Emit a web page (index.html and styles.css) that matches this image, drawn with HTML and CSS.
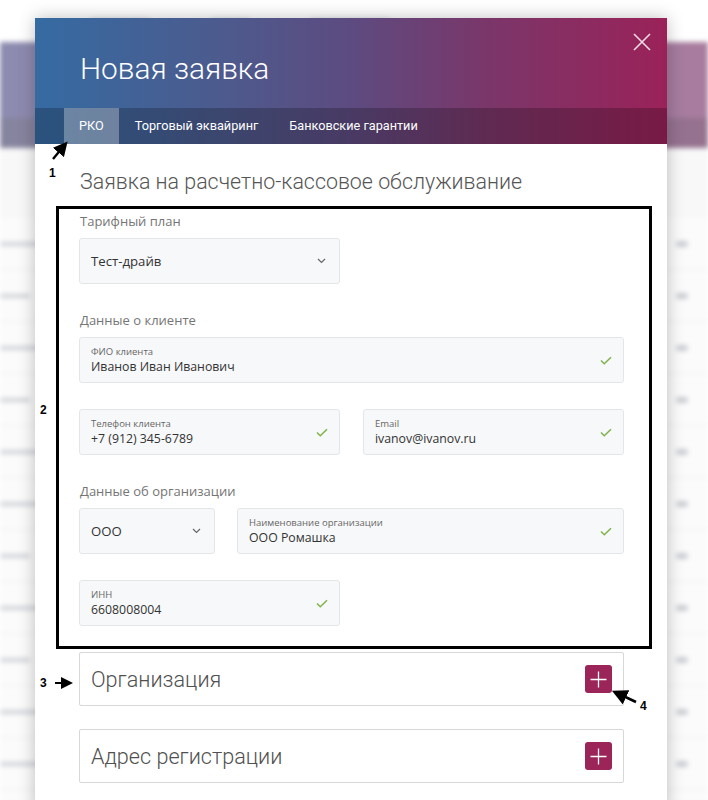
FILE: index.html
```html
<!DOCTYPE html>
<html lang="ru">
<head>
<meta charset="utf-8">
<title>Новая заявка</title>
<link rel="stylesheet" href="styles.css">
</head>
<body>
<div class="page">
  <div class="bg">
    <div class="bg-top">
      <span class="bg-txt w60"></span><span class="bg-txt w40"></span><span class="bg-txt w80"></span>
    </div>
    <div class="bg-band"><div class="bg-band-low"></div></div>
    <div class="bg-rows">
      <div class="bg-row"><span class="bg-txt w50"></span><span class="dot"></span></div>
      <div class="bg-row"><span class="bg-txt w30"></span><span class="dot"></span></div>
      <div class="bg-row"><span class="bg-txt w40"></span><span class="dot"></span></div>
      <div class="bg-row"><span class="bg-txt w30"></span><span class="dot"></span></div>
      <div class="bg-row"><span class="bg-txt w50"></span><span class="dot"></span></div>
      <div class="bg-row"><span class="bg-txt w40"></span><span class="dot"></span></div>
      <div class="bg-row"><span class="bg-txt w30"></span><span class="dot"></span></div>
      <div class="bg-row"><span class="bg-txt w40"></span><span class="dot"></span></div>
      <div class="bg-row"><span class="bg-txt w30"></span><span class="dot"></span></div>
      <div class="bg-row"><span class="bg-txt w50"></span><span class="dot"></span></div>
      <div class="bg-row"><span class="bg-txt w40"></span><span class="dot"></span></div>
      <div class="bg-row"><span class="bg-txt w30"></span><span class="dot"></span></div>
    </div>
  </div>

  <div class="modal">
    <div class="modal-head">
      <h1 class="modal-title">Новая заявка</h1>
      <button class="close" aria-label="Закрыть">
        <svg width="20" height="20" viewBox="0 0 20 20"><path d="M2 2 L18 18 M18 2 L2 18" stroke="#f3dbe6" stroke-width="1.6" fill="none"/></svg>
      </button>
      <nav class="tabs">
        <span class="tab active">РКО</span>
        <span class="tab">Торговый эквайринг</span>
        <span class="tab">Банковские гарантии</span>
      </nav>
    </div>

    <div class="modal-body">
      <h2 class="subtitle">Заявка на расчетно-кассовое обслуживание</h2>

      <div class="label first">Тарифный план</div>
      <div class="row half">
        <div class="field select">
          <span class="value">Тест-драйв</span>
          <svg class="chev" width="9" height="6" viewBox="0 0 9 6"><path d="M1 1 L4.5 4.5 L8 1" stroke="#666" stroke-width="1.2" fill="none"/></svg>
        </div>
      </div>

      <div class="label">Данные о клиенте</div>
      <div class="field">
        <div class="txt"><span class="small">ФИО клиента</span><span class="value">Иванов Иван Иванович</span></div>
        <svg class="check" width="12" height="9" viewBox="0 0 12 9"><path d="M1 4.5 L4.3 7.8 L11 1.2" stroke="#7fb24a" stroke-width="1.5" fill="none"/></svg>
      </div>
      <div class="row two gap-top">
        <div class="field">
          <div class="txt"><span class="small">Телефон клиента</span><span class="value">+7 (912) 345-6789</span></div>
          <svg class="check" width="12" height="9" viewBox="0 0 12 9"><path d="M1 4.5 L4.3 7.8 L11 1.2" stroke="#7fb24a" stroke-width="1.5" fill="none"/></svg>
        </div>
        <div class="field">
          <div class="txt"><span class="small">Email</span><span class="value">ivanov@ivanov.ru</span></div>
          <svg class="check" width="12" height="9" viewBox="0 0 12 9"><path d="M1 4.5 L4.3 7.8 L11 1.2" stroke="#7fb24a" stroke-width="1.5" fill="none"/></svg>
        </div>
      </div>

      <div class="label">Данные об организации</div>
      <div class="row org">
        <div class="field select">
          <span class="value">ООО</span>
          <svg class="chev" width="9" height="6" viewBox="0 0 9 6"><path d="M1 1 L4.5 4.5 L8 1" stroke="#666" stroke-width="1.2" fill="none"/></svg>
        </div>
        <div class="field">
          <div class="txt"><span class="small">Наименование организации</span><span class="value">ООО Ромашка</span></div>
          <svg class="check" width="12" height="9" viewBox="0 0 12 9"><path d="M1 4.5 L4.3 7.8 L11 1.2" stroke="#7fb24a" stroke-width="1.5" fill="none"/></svg>
        </div>
      </div>
      <div class="row half gap-top">
        <div class="field">
          <div class="txt"><span class="small">ИНН</span><span class="value">6608008004</span></div>
          <svg class="check" width="12" height="9" viewBox="0 0 12 9"><path d="M1 4.5 L4.3 7.8 L11 1.2" stroke="#7fb24a" stroke-width="1.5" fill="none"/></svg>
        </div>
      </div>

      <div class="section first-sec">
        <span class="section-title">Организация</span>
        <span class="plus"><svg width="17" height="17" viewBox="0 0 17 17"><path d="M8.5 0.5 V16.5 M0.5 8.5 H16.5" stroke="#fff" stroke-width="1.3" fill="none"/></svg></span>
      </div>
      <div class="section">
        <span class="section-title">Адрес регистрации</span>
        <span class="plus"><svg width="17" height="17" viewBox="0 0 17 17"><path d="M8.5 0.5 V16.5 M0.5 8.5 H16.5" stroke="#fff" stroke-width="1.3" fill="none"/></svg></span>
      </div>
    </div>

    <div class="annot-box"></div>
  </div>

  <svg class="annot" width="708" height="800" viewBox="0 0 708 800">
    <defs>
      <marker id="ah" markerWidth="6" markerHeight="6" refX="3" refY="3" orient="auto">
        <path d="M0 0 L6 3 L0 6 Z" fill="#000"/>
      </marker>
    </defs>
    <path d="M53 159 L63 147" stroke="#000" stroke-width="2.4" marker-end="url(#ah)"/>
    <path d="M55 683 L67 683" stroke="#000" stroke-width="2" marker-end="url(#ah)"/>
    <path d="M636 702 L619 694" stroke="#000" stroke-width="2.6" marker-end="url(#ah)"/>
  </svg>
  <span class="num n1">1</span>
  <span class="num n2">2</span>
  <span class="num n3">3</span>
  <span class="num n4">4</span>
</div>
</body>
</html>
```

FILE: styles.css
```css
* { box-sizing: border-box; }
html, body { margin: 0; padding: 0; }
body {
  width: 708px;
  height: 800px;
  overflow: hidden;
  font-family: "Open Sans", "Liberation Sans", sans-serif;
  background: #fff;
}
.page { position: relative; width: 708px; height: 800px; overflow: hidden; }

/* blurred background page */
.bg {
  position: absolute;
  inset: 0;
  filter: blur(2.5px);
  background: #f8f8f9;
}
.bg-top {
  height: 42px;
  background: #fff;
  display: flex;
  gap: 60px;
  align-items: center;
  padding: 0 90px;
}
.bg-band {
  height: 106px;
  background: linear-gradient(90deg, #8d8bb0 0%, #8e7fa8 50%, #a97c9e 100%);
  display: flex;
  flex-direction: column;
  justify-content: flex-end;
}
.bg-band-low {
  height: 30px;
  background: linear-gradient(90deg, #86859f 0%, #8a7494 60%, #96728f 100%);
}
.bg-rows { display: flex; flex-direction: column; padding-top: 70px; }
.bg-row {
  height: 52px;
  border-bottom: 1px solid #eeeef0;
  display: flex;
  justify-content: space-between;
  align-items: center;
  padding: 0 20px 0 0;
  background: #fbfbfb;
}
.bg-txt { display: inline-block; height: 4px; background: #cfd2d8; border-radius: 3px; }
.w30 { width: 30px; } .w40 { width: 40px; } .w50 { width: 50px; } .w60 { width: 60px; } .w80 { width: 80px; }
.dot { width: 12px; height: 6px; background: #c9ccd2; border-radius: 3px; }

/* modal */
.modal {
  position: absolute;
  left: 35px;
  top: 18px;
  width: 632px;
  height: 820px;
  background: #fff;
  box-shadow: 0 0 16px rgba(0,0,0,0.25);
}
.modal-head {
  position: relative;
  height: 126px;
  background: linear-gradient(90deg, #356ba2 0%, #4d5a8d 30%, #5d4b80 50%, #7b3669 72%, #9a2259 100%);
  display: flex;
  flex-direction: column;
}
.modal-title {
  margin: 0;
  height: 90px;
  padding: 33px 0 0 45px;
  font-family: Roboto, "Liberation Sans", sans-serif;
  font-weight: 300;
  font-size: 29.8px;
  line-height: 36px;
  color: #fff;
}
.close {
  position: absolute;
  right: 14px;
  top: 13px;
  width: 22px;
  height: 22px;
  padding: 1px;
  border: 0;
  background: none;
}
.tabs {
  height: 36px;
  background: rgba(0,0,0,0.22);
  display: flex;
  padding-left: 29px;
}
.tab {
  padding: 0 15px 0 15px;
  font-family: Roboto, "Liberation Sans", sans-serif;
  font-size: 12.7px;
  line-height: 36px;
  color: #fff;
}
.tab + .tab { padding-left: 16px; }
.tab.active { background: rgba(255,255,255,0.3); padding: 0 15px; }

.modal-body {
  padding: 25px 43px 0 44px;
  display: flex;
  flex-direction: column;
}
.subtitle {
  margin: 0 0 0 1px;
  font-family: Roboto, "Liberation Sans", sans-serif;
  font-weight: 300;
  font-size: 21.4px;
  line-height: 26px;
  color: #555;
}
.label {
  margin-top: 27px;
  padding-left: 1px;
  font-size: 13px;
  line-height: 18px;
  color: #757575;
  margin-bottom: 8px;
}
.label.first { margin-top: 17px; }

.row { display: grid; }
.row.half { grid-template-columns: 261px 1fr; }
.row.two { grid-template-columns: 1fr 1fr; column-gap: 23px; }
.row.org { grid-template-columns: 136px 1fr; column-gap: 22px; }
.gap-top { margin-top: 26px; }

.field {
  height: 46px;
  background: #f7f8f9;
  border: 1px solid #e3e6e9;
  border-radius: 3px;
  display: flex;
  align-items: center;
  justify-content: space-between;
  padding: 0 11px 0 11px;
}
.txt { display: flex; flex-direction: column; padding-top: 1px; }
.small { font-size: 9.5px; line-height: 12px; color: #666; }
.value { font-size: 12.3px; line-height: 18px; color: #333; }
.select .value { font-size: 13.2px; }
.chev { margin-right: 2px; }

.section {
  margin-top: 23px;
  height: 54px;
  border: 1px solid #d8d8d8;
  border-radius: 2px;
  display: flex;
  align-items: center;
  justify-content: space-between;
  padding: 0 11px 0 11px;
}
.section.first-sec { margin-top: 26px; }
.section-title {
  font-family: Roboto, "Liberation Sans", sans-serif;
  font-weight: 300;
  font-size: 21.6px;
  color: #505050;
}
.plus {
  width: 27px;
  height: 28px;
  background: #9b2458;
  border-radius: 3px;
  display: flex;
  align-items: center;
  justify-content: center;
}

/* annotations */
.annot-box {
  position: absolute;
  left: 21px;
  top: 188px;
  width: 596px;
  height: 443px;
  border: 3px solid #000;
}
.annot { position: absolute; left: 0; top: 0; }
.num {
  position: absolute;
  font-family: "Liberation Sans", sans-serif;
  font-weight: 700;
  font-size: 12px;
  line-height: 14px;
  color: #000;
}
.n1 { left: 49px; top: 166px; }
.n2 { left: 40px; top: 403px; }
.n3 { left: 40px; top: 676px; }
.n4 { left: 640px; top: 699px; }
```
